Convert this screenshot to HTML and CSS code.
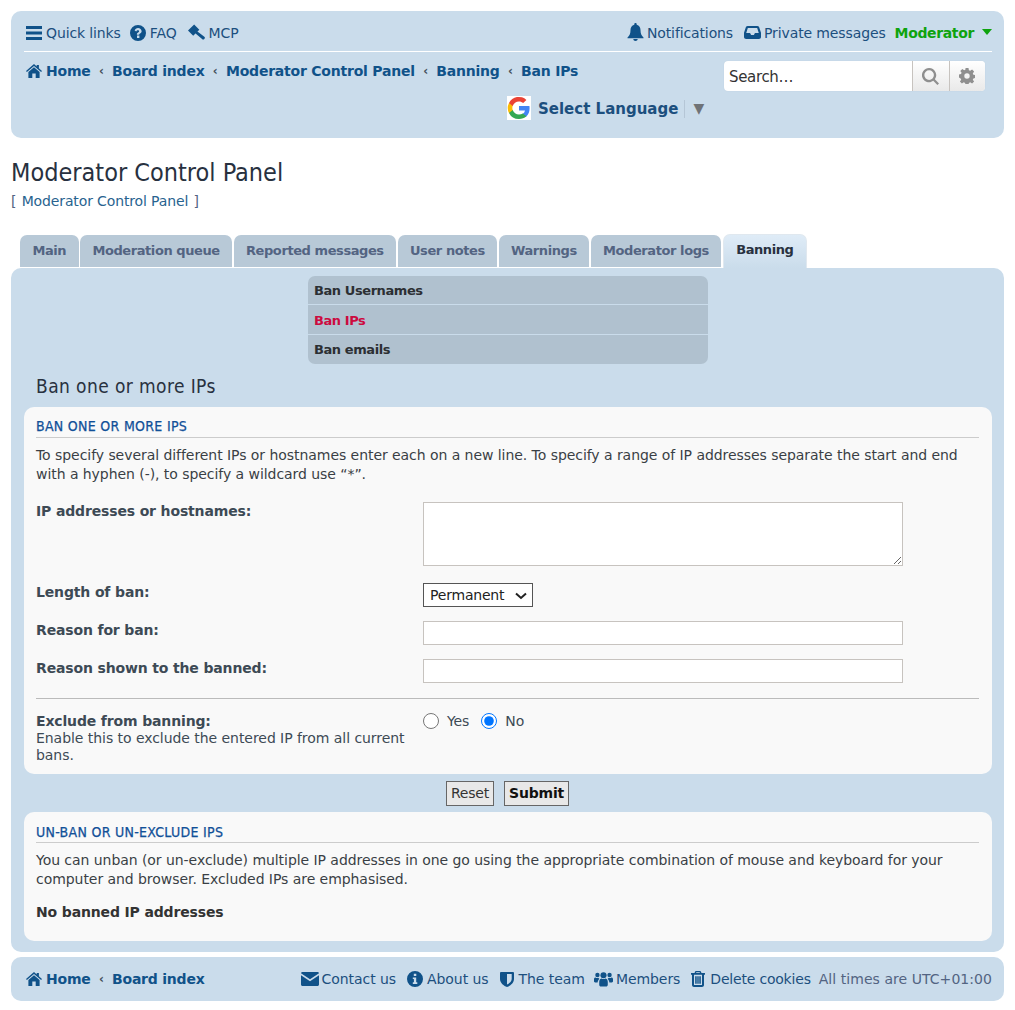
FILE: index.html
```html
<!DOCTYPE html>
<html lang="en">
<head>
<meta charset="utf-8">
<title>Moderator Control Panel</title>
<link rel="stylesheet" href="styles.css">
</head>
<body>
<svg class="sprites" width="0" height="0" aria-hidden="true">
  <symbol id="i-bars" viewBox="0 0 16 14"><path d="M0 0h16v3H0zM0 5.500h16v3H0zM0 11h16v3H0z"/></symbol>
  <symbol id="i-question" viewBox="0 0 16 16"><path fill-rule="evenodd" d="M8 0a8 8 0 1 1 0 16A8 8 0 0 1 8 0zM7 10.500v2.500h2.400v-2.500zM4.600 5.600l1.700 1c.3-.8.800-1.300 1.600-1.300.7 0 1.200.4 1.200 1 0 .5-.4.800-1 1.200-.9.500-1.200 1-1.200 2v.3h2.300c0-.6.200-.9.900-1.300 1-.6 1.500-1.200 1.500-2.300C11.600 4.300 10 3 8 3 6.400 3 5.200 3.900 4.600 5.600z"/></symbol>
  <symbol id="i-gavel" viewBox="0 0 18 16"><path d="M0 6.500 6.500 0 12 5.500 5.500 12zM8 9.500l2-2 7.300 5.500c.8.700.8 1.700 0 2.400s-1.700.800-2.400 0z"/></symbol>
  <symbol id="i-home" viewBox="0 0 16 14"><path d="M8 0l2.700 2.400V1h2.200v3.300L16 7l-.9 1L8 1.900.9 8 0 7zM8 3.300l5.600 4.800V14H9.700V9.500H6.300V14H2.400V8.100z"/></symbol>
  <symbol id="i-bell" viewBox="0 0 16 18"><path d="M8 0c.7 0 1.200.5 1.200 1.200v.5C11.800 2.300 13 4.400 13 7c0 4 1 5.500 3 7.500v.8H0v-.8C2 12.500 3 11 3 7c0-2.600 1.200-4.700 3.800-5.300v-.5C6.800.5 7.300 0 8 0zM5.800 16h4.400c0 1.200-1 2-2.200 2s-2.200-.8-2.200-2z"/></symbol>
  <symbol id="i-inbox" viewBox="0 0 16 13" preserveAspectRatio="none"><path fill-rule="evenodd" d="M3.500 0h9c.8 0 1.400.4 1.700 1.100L16 6.800V11c0 1.100-.9 2-2 2H2c-1.100 0-2-.9-2-2V6.800l1.800-5.700C2.100.4 2.700 0 3.500 0zM3.600 2L2.100 7h3.600l1 2h2.600l1-2h3.600l-1.500-5z"/></symbol>
  <symbol id="i-search" viewBox="0 0 16 16"><path fill-rule="evenodd" d="M6.700 0a6.700 6.700 0 0 1 5.400 10.600l3.900 3.900L14.500 16l-3.900-3.900A6.700 6.700 0 1 1 6.700 0zm0 2.200a4.500 4.500 0 1 0 0 9 4.500 4.500 0 0 0 0-9z"/></symbol>
  <symbol id="i-cog" viewBox="0 0 16 16"><path fill-rule="evenodd" d="M6.500 0h3l.4 2.200 1.300.6L13.100 1.500l2 2-1.300 1.900.6 1.300 2.100.4v2.900l-2.100.4-.6 1.300 1.300 1.900-2 2-1.900-1.300-1.300.6-.4 2.100h-3l-.4-2.100-1.300-.6-1.900 1.300-2-2 1.300-1.900-.6-1.300L-.1 9.400V6.500l2.100-.4.600-1.300-1.300-1.900 2-2 1.900 1.300 1.300-.6zM8 5.300a2.700 2.700 0 1 0 0 5.400 2.700 2.700 0 0 0 0-5.400z"/></symbol>
  <symbol id="i-env" viewBox="0 0 18 14"><path d="M1.500 0h15c.8 0 1.500.6 1.500 1.300L9 7.300 0 1.300C0 .6.700 0 1.500 0zM0 3.300l9 6 9-6v9.200c0 .8-.7 1.500-1.500 1.500h-15C.7 14 0 13.300 0 12.500z"/></symbol>
  <symbol id="i-info" viewBox="0 0 16 16"><path fill-rule="evenodd" d="M8 0a8 8 0 1 1 0 16A8 8 0 0 1 8 0zM6.800 2.700v2.400h2.500V2.700zM5.800 6.500v1.600h1.100v3.200H5.800V13h4.500v-1.700H9.200V6.500z"/></symbol>
  <symbol id="i-shield" viewBox="0 0 14 16"><path fill-rule="evenodd" d="M0 1.500 1 1h12l1 .5V8c0 4-4 7-7 8-3-1-7-4-7-8zM7 3v10.600c2-1 4.700-3 4.700-5.600V3z"/></symbol>
  <symbol id="i-group" viewBox="0 0 20 16"><circle cx="10" cy="4" r="3.200"/><circle cx="3.600" cy="3.800" r="2.300"/><circle cx="16.400" cy="3.800" r="2.300"/><path d="M5.500 11c0-2.400 1.500-3.600 2.500-3.600.7.400 1.300.7 2 .7s1.300-.3 2-.7c1 0 2.500 1.200 2.500 3.600v3c0 1.100-.8 1.900-1.900 1.900H7.400c-1.100 0-1.900-.8-1.900-1.900zM0 8c0-1 .8-1.700 1.500-1.700.6.400 1.300.6 2 .6.600 0 1-.1 1.300-.2.200.5.500.9.900 1.200-1 .7-1.800 2-1.900 3.700H1.200C.5 11.600 0 11.100 0 10.400zM20 8c0-1-.8-1.700-1.500-1.700-.6.400-1.300.6-2 .6-.6 0-1-.1-1.300-.2-.2.500-.5.900-.9 1.200 1 .7 1.800 2 1.900 3.700h2.600c.7 0 1.200-.5 1.200-1.200z"/></symbol>
  <symbol id="i-trash" viewBox="0 0 14 16"><path fill-rule="evenodd" d="M4.500 0h5l1 2H14v1.700h-1V14c0 1.100-.9 2-2 2H3c-1.100 0-2-.9-2-2V3.700H0V2h3.500zM5.400 1.300 5 2h4l-.4-.7zM3 3.700V14h8V3.700zM4.200 5.200h1.500v7.600H4.200zM6.300 5.200h1.400v7.600H6.300zM8.300 5.200h1.500v7.600H8.300z"/></symbol>
</svg>

<header class="headerbar">
  <nav class="topnav">
    <ul class="navlist">
      <li><a class="navlink"><svg class="ico ico-bars"><use href="#i-bars"/></svg>Quick links</a></li>
      <li><a class="navlink"><svg class="ico ico-round"><use href="#i-question"/></svg>FAQ</a></li>
      <li><a class="navlink"><svg class="ico ico-gavel"><use href="#i-gavel"/></svg>MCP</a></li>
    </ul>
    <ul class="navlist">
      <li><a class="navlink"><svg class="ico ico-bell"><use href="#i-bell"/></svg>Notifications</a></li>
      <li><a class="navlink"><svg class="ico ico-inbox"><use href="#i-inbox"/></svg>Private messages</a></li>
      <li><a class="userlink">Moderator<span class="caret"></span></a></li>
    </ul>
  </nav>
  <div class="crumbrow">
    <div class="crumbs">
      <svg class="ico ico-home"><use href="#i-home"/></svg><a>Home</a><span class="sep">‹</span><a>Board index</a><span class="sep">‹</span><a>Moderator Control Panel</a><span class="sep">‹</span><a>Banning</a><span class="sep">‹</span><a>Ban IPs</a>
    </div>
    <div class="search">
      <span class="search-input">Search…</span>
      <span class="search-btn"><svg class="sico sico-search"><use href="#i-search"/></svg></span>
      <span class="search-btn"><svg class="sico"><use href="#i-cog"/></svg></span>
    </div>
  </div>
  <div class="translate">
    <svg class="glogo" viewBox="0 0 24 24"><rect width="24" height="24" fill="#fff"/><path fill="#4285f4" d="M22.600 12.300c0-.8-.1-1.600-.2-2.300H12v4.400h6a5.100 5.100 0 0 1-2.200 3.300v2.800h3.600c2-1.900 3.200-4.800 3.200-8.200z"/><path fill="#34a853" d="M12 23c3 0 5.500-1 7.400-2.700l-3.600-2.800c-1 .7-2.300 1.100-3.800 1.100-2.900 0-5.400-2-6.300-4.600H2v2.900A11 11 0 0 0 12 23z"/><path fill="#fbbc05" d="M5.700 14a6.600 6.600 0 0 1 0-4.200V7H2a11 11 0 0 0 0 10z"/><path fill="#ea4335" d="M12 5.400c1.600 0 3.100.6 4.200 1.700l3.200-3.200A11 11 0 0 0 2 7l3.700 2.900C6.600 7.300 9.100 5.400 12 5.400z"/></svg>
    <span class="translate-label">Select Language</span>
    <span class="translate-arrow">▼</span>
  </div>
</header>

<h1 class="pagetitle">Moderator Control Panel</h1>
<p class="subcrumb">[ <a>Moderator Control Panel</a> ]</p>

<ul class="tabs">
  <li class="tab">Main</li>
  <li class="tab">Moderation queue</li>
  <li class="tab">Reported messages</li>
  <li class="tab">User notes</li>
  <li class="tab">Warnings</li>
  <li class="tab">Moderator logs</li>
  <li class="tab tab-active">Banning</li>
</ul>

<main class="panel">
  <ul class="submenu">
    <li>Ban Usernames</li>
    <li class="current">Ban IPs</li>
    <li>Ban emails</li>
  </ul>
  <h2 class="panel-title">Ban one or more IPs</h2>

  <section class="card">
    <h3 class="card-head">BAN ONE OR MORE IPS</h3>
    <p class="card-text">To specify several different IPs or hostnames enter each on a new line. To specify a range of IP addresses separate the start and end with a hyphen (-), to specify a wildcard use “*”.</p>
    <div class="fields">
      <label class="flabel flabel-down">IP addresses or hostnames:</label>
      <textarea class="ctl ctl-area"></textarea>
      <label class="flabel">Length of ban:</label>
      <div class="select-wrap"><select class="ctl-select"><option>Permanent</option></select><svg class="select-chevron" viewBox="0 0 12 8"><path d="M1 1.500 6 6l5-4.500" fill="none" stroke="#222" stroke-width="2"/></svg></div>
      <label class="flabel flabel-up">Reason for ban:</label>
      <input class="ctl ctl-text" type="text">
      <label class="flabel flabel-up">Reason shown to the banned:</label>
      <input class="ctl ctl-text" type="text">
    </div>
    <hr class="rule">
    <div class="fields fields-last">
      <div class="flabel-wrap"><label class="flabel">Exclude from banning:</label><span class="fhelp">Enable this to exclude the entered IP from all current bans.</span></div>
      <div class="radios">
        <label class="radio"><input type="radio" name="ex">Yes</label>
        <label class="radio"><input type="radio" name="ex" checked>No</label>
      </div>
    </div>
  </section>

  <div class="actions">
    <button class="btn">Reset</button>
    <button class="btn btn-main">Submit</button>
  </div>

  <section class="card card-2">
    <h3 class="card-head">UN-BAN OR UN-EXCLUDE IPS</h3>
    <p class="card-text">You can unban (or un-exclude) multiple IP addresses in one go using the appropriate combination of mouse and keyboard for your computer and browser. Excluded IPs are emphasised.</p>
    <p class="none">No banned IP addresses</p>
  </section>
</main>

<footer class="footerbar">
  <div class="crumbs">
    <svg class="ico ico-home"><use href="#i-home"/></svg><a>Home</a><span class="sep">‹</span><a>Board index</a>
  </div>
  <ul class="navlist footlinks">
    <li><a class="navlink"><svg class="ico ico-env"><use href="#i-env"/></svg>Contact us</a></li>
    <li><a class="navlink"><svg class="ico ico-round"><use href="#i-info"/></svg>About us</a></li>
    <li><a class="navlink"><svg class="ico ico-shield"><use href="#i-shield"/></svg>The team</a></li>
    <li class="foot-members"><a class="navlink"><svg class="ico ico-group"><use href="#i-group"/></svg>Members</a></li>
    <li class="foot-delete"><a class="navlink"><svg class="ico ico-trash"><use href="#i-trash"/></svg>Delete cookies</a></li>
    <li class="times">All times are UTC+01:00</li>
  </ul>
</footer>
</body>
</html>
```
FILE: styles.css
```css
* { box-sizing: border-box; }
html, body { margin: 0; padding: 0; }
body {
  background: #fff;
  color: #333;
  font-family: "DejaVu Sans", Verdana, sans-serif;
  font-size: 14px;
  padding: 11px 11px 0;
  width: 1015px;
  height: 1010px;
  overflow: hidden;
}
.sprites { position: absolute; }
ul { list-style: none; margin: 0; padding: 0; }
a { color: #105289; }

.headerbar {
  background: #cadceb;
  border-radius: 10px;
  height: 127px;
  padding: 0 12px 0 13px;
}
.topnav {
  display: flex;
  justify-content: space-between;
  height: 41px;
  border-bottom: 1px solid #fff;
  padding: 4px 0 0 2px;
  align-items: center;
}
.navlist { display: flex; gap: 9px; align-items: center; }
.navlink { display: flex; align-items: center; color: #1c4f7e; font-size: 14px; letter-spacing: -.12px; white-space: nowrap; }
.ico { fill: #105289; flex: none; margin-right: 4px; }
.ico-bars { width: 16px; height: 14px; }
.ico-round { width: 16px; height: 16px; }
.ico-gavel { width: 17px; height: 16px; margin: 0 4px 2px 2px; }
.ico-bell { width: 17px; height: 18px; margin: 0 3px 2px 0; }
.ico-inbox { width: 17px; height: 13px; margin: 0 3px 2px 2px; }
.ico-home { width: 16px; height: 14px; margin-right: 4px; }
.ico-env { width: 18px; height: 14px; margin-right: 3px; }
.ico-shield { width: 14px; height: 16px; margin-right: 5px; }
.ico-group { width: 19px; height: 16px; margin-right: 3px; }
.ico-trash { width: 14px; height: 16px; margin-right: 5px; }
.userlink { display: flex; align-items: center; color: #0ea30e; font-weight: 700; font-size: 14px; letter-spacing: -.36px; }
.caret { width: 0; height: 0; border: 5.500px solid transparent; border-top: 6px solid #0ea30e; border-bottom: 0; margin-left: 8px; margin-bottom: 2px; }

.crumbrow { display: flex; justify-content: space-between; padding: 9px 2px 0; height: 44px; }
.crumbs { display: flex; align-items: center; height: 20px; font-weight: 700; font-size: 14px; letter-spacing: -.22px; white-space: nowrap; }
.crumbs a { color: #105289; }
.sep { font-weight: 700; font-size: 12px; color: #444f5a; width: 21.500px; text-align: center; }

.search {
  display: flex;
  width: 261px;
  height: 30px;
  margin: 0 5px 0 0;
  background: #fff;
  border-radius: 4px;
  overflow: hidden;
  box-shadow: 0 0 1px #b0c4d6;
}
.search-input { flex: 1; padding: 0 5px; line-height: 32px; color: #333; font-size: 15px; letter-spacing: -.35px; }
.search-btn {
  width: 36.500px;
  display: flex;
  align-items: center;
  justify-content: center;
  background: linear-gradient(#fff, #e9e9e9);
  border-left: 1px solid #c7c3bf;
}
.sico { width: 16px; height: 16px; fill: #8f8f8f; }
.sico-search { width: 17px; height: 17px; }

.translate { display: flex; align-items: center; margin: 0 0 0 483px; height: 24px; }
.glogo { width: 24px; height: 24px; flex: none; }
.translate-label { margin: 1px 0 0 7px; padding-right: 6px; font-weight: 700; font-size: 15px; color: #1c4f7e; border-right: 1px solid #b5c6d6; line-height: 18px; white-space: nowrap; }
.translate-arrow { margin-left: 8px; color: #6f7377; font-size: 14px; }

.pagetitle { font-weight: 400; font-size: 25px; line-height: 28px; margin: 21px 0 0; color: #28313f; font-family: "DejaVu Sans Condensed", "DejaVu Sans", sans-serif; }
.subcrumb { margin: 6px 0 0; height: 17px; font-size: 14px; line-height: 17px; color: #536482; letter-spacing: -.13px; word-spacing: 1px; }
.subcrumb a { color: #28638f; word-spacing: 0; }

.tabs { display: flex; gap: 1.500px; margin: 25px 0 0 9px; height: 33px; align-items: flex-start; }
.tab {
  background: #b8c9d7;
  color: #536482;
  font-weight: 700;
  font-size: 13px;
  height: 32px;
  line-height: 31px;
  padding: 0 12.400px;
  border-radius: 7px 7px 0 0;
  letter-spacing: -.42px;
  white-space: nowrap;
}
.tab-active {
  height: 34px;
  line-height: 29px;
  margin-top: -1px;
  background: linear-gradient(#dfecf7, #cadceb);
  color: #28313f;
  border: 1px solid #e0e8ef;
  border-bottom: 0;
}

.panel {
  background: #cadceb;
  border-radius: 10px;
  height: 684px;
  padding: 8px 12px 0 13px;
}
.submenu {
  width: 400px;
  margin: 0 auto;
  background: #b0c1cf;
  border-radius: 7px;
  font-weight: 700;
  font-size: 13px;
  color: #2c2f33;
  letter-spacing: -.42px;
}
.submenu li { height: 30px; line-height: 31px; padding: 0 6px; border-bottom: 1px solid #cadceb; }
.submenu li:first-child { height: 29px; line-height: 30px; }
.submenu li:last-child { height: 29px; line-height: 30px; border-bottom: 0; }
.submenu .current { color: #cc0b3f; }

.panel-title { font-weight: 400; font-size: 19px; line-height: 22px; margin: 11px 0 10px 12px; color: #28313f; font-family: "DejaVu Sans Condensed", "DejaVu Sans", sans-serif; letter-spacing: .4px; }

.card { background: #f9f9f9; border-radius: 10px; padding: 11px 13px 0 12px; height: 367px; }
.card-2 { height: 129px; padding-top: 12px; }
.card-head { margin: 0; font-weight: 400; font-family: "DejaVu Sans Condensed", "DejaVu Sans", sans-serif; font-size: 14px; line-height: 16px; height: 20px; color: #115098; border-bottom: 1px solid #ccc; letter-spacing: .3px; -webkit-text-stroke: .25px #115098; }
.card-2 .card-head { height: 19px; }
.card-text { margin: 8px 0 0; font-size: 14px; line-height: 19px; color: #3a3f45; letter-spacing: -.055px; }

.fields { display: grid; grid-template-columns: 387px 480px; row-gap: 16px; margin-top: 18px; }
.flabel { font-weight: 700; font-size: 14px; line-height: 17px; color: #3d4a55; letter-spacing: -.15px; }
.flabel-up { margin-top: -1px; }
.flabel-down { margin-top: 1px; }
.ctl { display: block; width: 480px; background: #fff; border: 1px solid #c7c3bf; padding: 0; margin: 0; border-radius: 0; }
.ctl-area { height: 64px; resize: vertical; margin-bottom: 2px; }
.ctl-text { height: 24px; margin-top: -2px; }
.select-wrap { position: relative; width: 110px; }
.ctl-select { appearance: none; width: 110px; height: 24px; background: #fff; border: 1px solid #555; font: 14px "DejaVu Sans", sans-serif; letter-spacing: -.2px; padding: 0 6px; color: #222; border-radius: 0; margin-top: -1px; display: block; }
.select-chevron { position: absolute; right: 6px; top: 8px; width: 12px; height: 8px; pointer-events: none; }
.rule { border: 0; border-top: 1px solid #bbb; margin: 15px 0 0; }
.fields-last { margin-top: 14px; }
.flabel-wrap { display: flex; flex-direction: column; }
.fhelp { font-size: 14px; line-height: 17px; color: #3d4a55; letter-spacing: -.05px; width: 375px; }
.radios { display: flex; gap: 12px; height: 20px; margin-top: -1px; }
.radio { display: flex; align-items: center; font-size: 14px; color: #3d4a55; letter-spacing: -.1px; height: 18px; }
.radio input { margin: 0 8px 0 0; width: 16px; height: 16px; }

.actions { display: flex; justify-content: center; gap: 10px; height: 38px; padding-top: 7px; padding-right: 1px; }
.btn { height: 25px; padding: 0 4px 2px; font: 14px "DejaVu Sans", sans-serif; letter-spacing: -.2px; background: #e8e8e8; border: 1px solid #666; color: #333; border-radius: 0; }
.btn-main { font-weight: 700; color: #111; }

.none { margin: 15px 0 0; font-weight: 700; font-size: 14px; line-height: 17px; color: #333; letter-spacing: -.15px; }

.footerbar {
  display: flex;
  justify-content: space-between;
  align-items: center;
  background: #cadceb;
  border-radius: 10px;
  height: 44px;
  margin-top: 5px;
  padding: 0 12px 0 15px;
}
.footlinks { gap: 11px; }
.footlinks .navlink { letter-spacing: -.06px; }
.footlinks .foot-delete .navlink { letter-spacing: -.2px; }
.foot-members { margin-left: -2px; }
.times { color: #536482; font-size: 14px; letter-spacing: .05px; margin-left: -3px; white-space: nowrap; }
```
